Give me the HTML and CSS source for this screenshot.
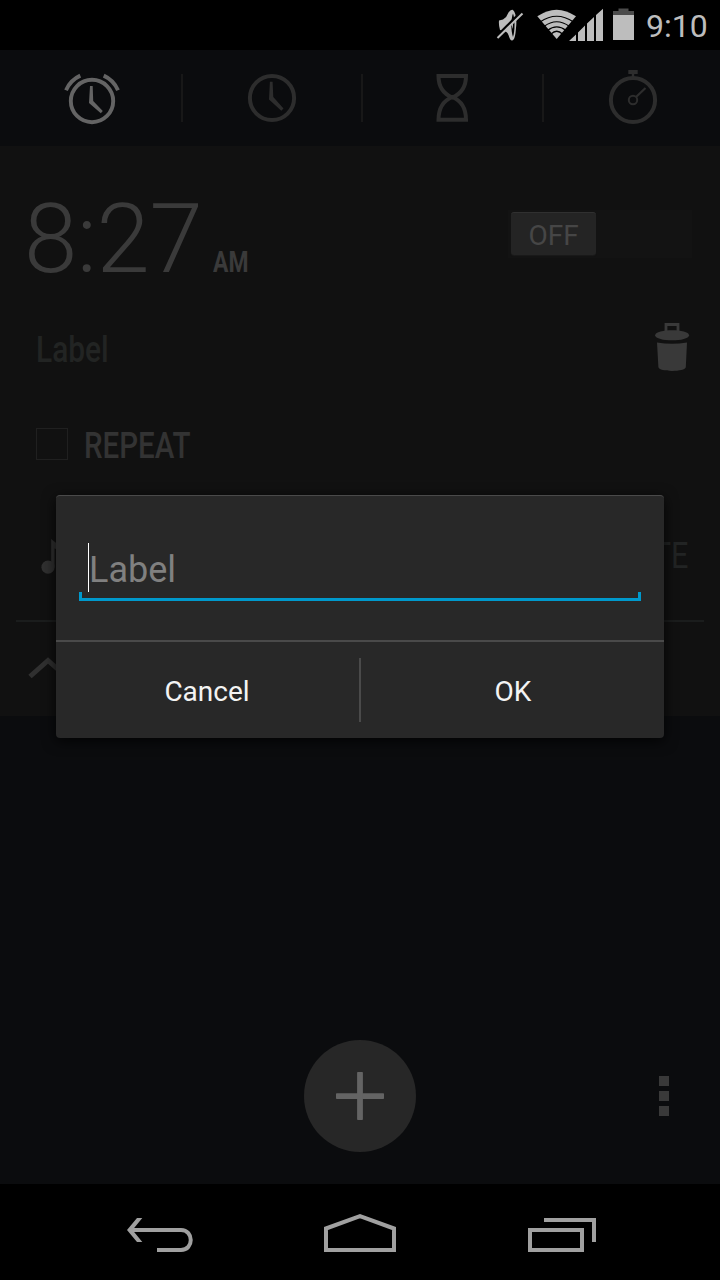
FILE: index.html
```html
<!DOCTYPE html>
<html lang="en">
<head>
<meta charset="utf-8">
<title>Alarm</title>
<link rel="stylesheet" href="styles.css">
</head>
<body>
<div class="screen">
  <header class="status-bar">
    <svg class="status-icons" width="150" height="50" viewBox="490 0 150 50">
      <g fill="#bdbdbd">
        <path d="M499 20.500 L503 19.500 Q507 17 508.500 12.500 Q510.500 9.500 512.500 9.800 C516 12 517 20 516 28 C515.500 35 514.500 40.500 512 40.500 Q510 40.500 508.500 35 Q507 31 503 31 L500 30 Q498.500 25 499 20.500Z"/>
        <path d="M513 13.500 C510.800 19 510.800 31 513 37 C515 31 515 19 513 13.500Z" fill="#000"/>
        <path d="M512 21 Q514 25 512 29Z"/>
        <path d="M495.500 37.500 L521 12" stroke="#000" stroke-width="2.500"/>
        <path d="M497.500 38 L522.500 13.500" stroke="#bdbdbd" stroke-width="2"/>
        <path d="M537.300 16.300 Q556.500 3 576 16.300 L556.700 39Z"/>
        <path d="M569 41 L576 34.500 V41Z M578 32.500 L585 25.500 V41 H578Z M587 23.500 L594 17 V41 H587Z M596 15 L603 8.800 V41 H596Z"/>
        <path d="M613 15 H634 V40 H613Z"/>
        <path d="M618.500 8.500 H628.500 V11 H634 V15 H613 V11 H618.500Z" fill="#4b4b4b"/>
      </g>
      <g fill="none" stroke="#000" stroke-width="1.200">
        <path d="M540 22 Q556.700 10.500 573.500 22"/>
        <path d="M544 26.500 Q556.700 17 569.500 26.500"/>
        <path d="M547.500 30.500 Q556.700 23.300 566 30.500"/>
        <path d="M551 34 Q556.700 28.500 562.500 34"/>
      </g>
    </svg>
    <span class="clock">9:10</span>
  </header>

  <nav class="tabs">
    <div class="tab active">
      <svg width="181" height="96" viewBox="0 50 181 96">
        <circle cx="92" cy="101" r="21.200" stroke-width="3.900"/>
        <path d="M66 90.200 Q70.500 80 80.300 75.600 M103.700 75.600 Q113.500 80 118 90.200" stroke-width="3.900"/>
        <path class="hand" d="M90 86 H92.700 L93.200 101 L102.800 111 L100.800 113.200 L89 103Z"/>
      </svg>
    </div>
    <div class="tab divided">
      <svg width="178" height="96" viewBox="183 50 178 96">
        <circle cx="272" cy="98" r="22.100" stroke-width="4"/>
        <path class="hand" d="M269.900 81.700 H272.600 L273.300 97 L283.500 108.500 L281.300 110.800 L269 99.500Z"/>
      </svg>
    </div>
    <div class="tab divided">
      <svg width="179" height="96" viewBox="363 50 179 96">
        <path d="M438.500 76 H466 C466 88 459.500 94.500 452.300 97.500 C445 94.500 438.500 88 438.500 76Z M438.500 119.700 H466 C466 107 459.500 100 452.300 97 C445 100 438.500 107 438.500 119.700Z" stroke-width="4"/>
      </svg>
    </div>
    <div class="tab divided">
      <svg width="176" height="96" viewBox="544 50 176 96">
        <circle cx="633" cy="100" r="22.100" stroke-width="4"/>
        <circle cx="633" cy="100" r="4.200" stroke-width="2"/>
        <path d="M636 97 L645.500 88" stroke-width="2.200"/>
        <path class="hand" d="M628.300 70 H637.700 V74 H634.200 V78 H631.800 V74 H628.300Z"/>
      </svg>
    </div>
  </nav>

  <main class="alarm">
    <div class="time-row">
      <div class="time"><span class="digits">8:27</span><span class="meridiem">AM</span></div>
      <div class="switch"><div class="thumb"><span>OFF</span></div></div>
    </div>
    <div class="label-row">
      <span class="alarm-label">Label</span>
      <svg width="36" height="50" viewBox="654 322 36 50" fill="#393939">
        <path d="M666 331 V324.500 H678 V331" fill="none" stroke="#393939" stroke-width="2.800"/>
        <path d="M655.200 335.200 C655.200 328.500 689 328.500 689 335.200 C689 342 655.200 342 655.200 335.200Z"/>
        <path d="M657 342.500 Q672 345 687 342.500 L685.800 367 C685.500 372.200 658.700 372.200 658.400 367Z"/>
      </svg>
    </div>
    <div class="repeat-row"><span class="checkbox"></span><span class="repeat">REPEAT</span></div>
    <div class="ringtone-row">
      <svg width="40" height="52" viewBox="38 530 40 52" fill="#303030">
        <circle cx="48" cy="567.200" r="6.600"/>
        <path d="M51.200 539 L60 546 Q65 552 63 560 Q61 550 54.600 548.500 V567 H51.200Z"/>
      </svg>
      <span class="vibrate">VIBRATE</span>
    </div>
    <div class="collapse-row">
      <svg width="42" height="30" viewBox="27 654 42 30"><path d="M30 676.500 L48 660.500 L66 676.500" fill="none" stroke="#303030" stroke-width="5"/></svg>
    </div>
  </main>

  <section class="actions">
    <div class="add">
      <svg width="112" height="112" viewBox="0 0 112 112" fill="#646464"><rect x="32" y="53.200" width="48" height="5.800" rx=".8"/><rect x="53.100" y="32" width="5.800" height="48" rx=".8"/></svg>
    </div>
    <div class="overflow"><i></i><i></i><i></i></div>
  </section>

  <footer class="nav-bar">
    <svg width="720" height="96" viewBox="0 1184 720 96" fill="none" stroke="#a0a0a0" stroke-width="4">
      <path d="M130 1230 H181 C194 1230 194 1250 181 1250 H157"/>
      <path d="M127 1230 L137 1218 H142.300 L132.500 1230 L142.300 1242 H137Z" fill="#a0a0a0" stroke="none"/>
      <path d="M326 1228.500 L360 1216.200 L394 1228.500 V1250 H326Z"/>
      <path d="M530 1230 H582 V1250 H530Z M544 1220 H594 V1242"/>
    </svg>
  </footer>

  <div class="dialog">
    <div class="dialog-body">
      <div class="field"><span class="caret"></span><span class="hint">Label</span></div>
    </div>
    <div class="buttons">
      <div class="button"><span class="cancel">Cancel</span></div>
      <div class="button"><span class="ok">OK</span></div>
    </div>
  </div>
</div>
</body>
</html>
```
FILE: styles.css
```css
* { box-sizing: border-box; }
body { margin: 0; background: #000; }
svg { display: block; flex: none; }
span { white-space: nowrap; }

.screen {
  position: relative;
  width: 720px;
  height: 1280px;
  overflow: hidden;
  display: flex;
  flex-direction: column;
  background: #0b0c0e;
  font-family: Roboto, "Noto Sans", sans-serif;
}

.status-bar {
  height: 50px;
  display: flex;
  justify-content: flex-end;
  padding-right: 12px;
  background: #000;
}
.clock {
  width: 68px;
  padding-left: 6px;
  font-size: 32px;
  line-height: 53px;
  color: #bdbdbd;
}

.tabs { height: 96px; display: flex; }
.tab { display: flex; align-items: center; }
.tab svg { fill: none; stroke: #2d2d2d; }
.tab .hand { fill: #2d2d2d; stroke: none; }
.tab.active svg { stroke: #646464; }
.tab.active .hand { fill: #646464; }
.tab.divided::before { content: ""; width: 2px; height: 48px; background: #181818; }

.alarm {
  height: 570px;
  padding: 0 16px;
  background: #111;
}
.time-row {
  height: 156px;
  padding: 0 12px 0 8px;
  display: flex;
  justify-content: space-between;
}
.time { display: flex; align-items: baseline; height: 156px; color: #3a3a3a; line-height: 186px; }
.digits { width: 189px; font-size: 96px; font-weight: 300; letter-spacing: -.4px; }
.meridiem { font-size: 29px; font-weight: 700; transform: scaleX(.79); transform-origin: left; }
.switch { width: 184px; height: 48px; margin-top: 64px; padding: 2px 3px; background: #131313; }
.thumb {
  width: 85px;
  height: 43px;
  border-radius: 3px;
  background: #242424;
  border-top: 1px solid #303030;
  box-shadow: 0 1px 1px #1b1b1b;
  text-align: center;
  font-size: 28px;
  line-height: 45px;
  color: #464646;
}
.thumb span { display: inline-block; }
.label-row {
  height: 90px;
  padding: 20px 14px 0 20px;
  display: flex;
  justify-content: space-between;
}
.alarm-label {
  font-size: 36px;
  font-weight: 500;
  line-height: 56px;
  color: #222423;
  transform: scaleX(.83);
  transform-origin: left;
}
.repeat-row { height: 103px; display: flex; align-items: center; gap: 16px; padding: 0 20px; }
.checkbox { width: 32px; height: 32px; border: 1px solid #202020; }
.repeat {
  padding-top: 5px;
  font-size: 36px;
  font-weight: 500;
  color: #333;
  transform: scaleX(.82);
  transform-origin: left;
}
.ringtone-row {
  height: 127px;
  border-bottom: 2px solid #1b1d1d;
  padding: 0 16px 4px 22px;
  display: flex;
  align-items: center;
  justify-content: space-between;
}
.vibrate { font-size: 36px; color: #222424; transform: scaleX(.85); transform-origin: right; }
.collapse-row { height: 94px; padding: 32px 11px; }

.actions {
  height: 468px;
  padding: 324px 51px 0 304px;
  display: flex;
  justify-content: space-between;
}
.add { width: 112px; height: 112px; border-radius: 50%; background: #272727; }
.overflow { display: grid; grid-auto-rows: 10px; gap: 5px; width: 10px; padding-top: 36px; }
.overflow i { background: #393939; }

.nav-bar { height: 96px; background: #000; }

.dialog {
  position: absolute;
  left: 56px;
  top: 495px;
  width: 608px;
  height: 243px;
  border-radius: 4px;
  border-top: 1px solid #4a4a4a;
  background: #282828;
  box-shadow: 0 3px 14px rgba(0, 0, 0, .8);
}
.dialog-body { height: 146px; padding: 46px 23px 0; border-bottom: 2px solid #4a4a4a; }
.field {
  height: 59px;
  display: flex;
  align-items: flex-start;
  padding-left: 9px;
  border-bottom: 3px solid #0099cc;
  background:
    linear-gradient(#0099cc, #0099cc) left bottom / 3px 6px no-repeat,
    linear-gradient(#0099cc, #0099cc) right bottom / 3px 6px no-repeat;
}
.caret { width: 1px; height: 49px; margin-top: 1px; background: #fff; }
.hint { font-size: 36px; line-height: 56px; color: #808080; }
.buttons { height: 96px; display: flex; }
.button {
  position: relative;
  flex: 1;
  display: flex;
  align-items: center;
  justify-content: center;
  font-size: 28px;
  color: #f3f3f3;
}
.button:first-child::after {
  content: "";
  position: absolute;
  right: -1px;
  top: 16px;
  width: 2px;
  height: 64px;
  background: #4a4a4a;
}
.cancel { padding: 2px 2px 0 0; }
.ok { padding: 2px 0 0 2px; }
```
